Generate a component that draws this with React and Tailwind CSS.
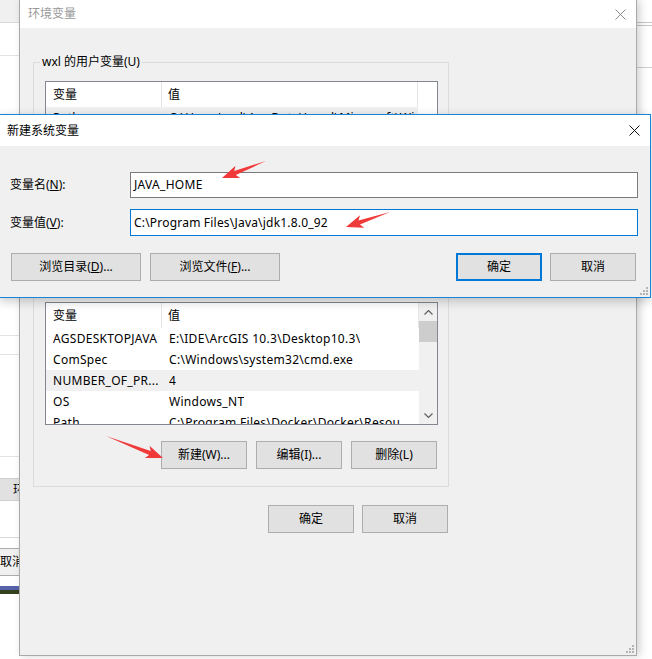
import React from 'react';

const FONT = "font-['Noto_Sans','Noto_Sans_CJK_SC',sans-serif]";

const CloseIcon = ({ color }) => (
  <svg width="11" height="11" viewBox="0 0 11 11">
    <path d="M0.5 0.5 L10.5 10.5 M10.5 0.5 L0.5 10.5" stroke={color} strokeWidth="1" fill="none" />
  </svg>
);

const Grip = () => (
  <svg width="8" height="8" viewBox="0 0 8 8" fill="#b4b4b4">
    <rect x="6" y="0" width="2" height="2" />
    <rect x="3" y="3" width="2" height="2" />
    <rect x="6" y="3" width="2" height="2" />
    <rect x="0" y="6" width="2" height="2" />
    <rect x="3" y="6" width="2" height="2" />
    <rect x="6" y="6" width="2" height="2" />
  </svg>
);

const Chevron = ({ up }) => (
  <svg width="9" height="5" viewBox="0 0 9 5">
    <path d={up ? "M0.5 4.5 L4.5 0.5 L8.5 4.5" : "M0.5 0.5 L4.5 4.5 L8.5 0.5"} stroke="#606060" strokeWidth="1.2" fill="none" />
  </svg>
);

const Btn = ({ children, className = "", primary }) => (
  <div
    className={`flex items-center justify-center h-[28px] bg-[#e1e1e1] text-[12px] text-black ${
      primary ? "border-2 border-[#0078d7]" : "border border-[#adadad]"
    } ${className}`}
  >
    {children}
  </div>
);

const Row = ({ name, value, active }) => (
  <div className={`flex h-[21px] items-center text-[12px] tracking-[0.3px] text-black whitespace-nowrap ${active ? "bg-[#f0f0f0]" : ""}`}>
    <div className="w-[116px] shrink-0 pl-[7px] overflow-hidden">{name}</div>
    <div className="pl-[7px] overflow-hidden">{value}</div>
  </div>
);

const ListHeader = () => (
  <div className="flex h-[25px] items-center text-[12px] text-black bg-white">
    <div className="w-[116px] shrink-0 h-full flex items-center pl-[7px] border-r border-[#e5e5e5]">变量</div>
    <div className="flex-1 h-full flex items-center pl-[6px] border-r border-[#e5e5e5]">值</div>
  </div>
);

const sysRows = [
  ["AGSDESKTOPJAVA", "E:\\IDE\\ArcGIS 10.3\\Desktop10.3\\"],
  ["ComSpec", "C:\\Windows\\system32\\cmd.exe"],
  ["NUMBER_OF_PR...", "4", true],
  ["OS", "Windows_NT"],
  ["Path", "C:\\Program Files\\Docker\\Docker\\Resou..."],
];

// snipping-tool style arrow, tail tapering to a point
const arrowPts = (tx, ty, sx, sy) => {
  const dx = tx - sx;
  const dy = ty - sy;
  const len = Math.hypot(dx, dy);
  const ux = dx / len;
  const uy = dy / len;
  const px = -uy;
  const py = ux;
  const head = 14;
  const hw = 6.5;
  const sw = 2.2;
  const bx = tx - ux * head;
  const by = ty - uy * head;
  const pts = [
    [sx, sy],
    [bx + px * sw, by + py * sw],
    [bx + px * hw - ux * 3, by + py * hw - uy * 3],
    [tx, ty],
    [bx - px * hw - ux * 3, by - py * hw - uy * 3],
    [bx - px * sw, by - py * sw],
  ];
  return pts.map((p) => p.join(",")).join(" ");
};

const Arrows = () => (
  <svg className="absolute inset-0 pointer-events-none" width="652" height="659">
    <polygon points={arrowPts(222, 178, 266, 161)} fill="#f03a3a" />
    <polygon points={arrowPts(346, 227, 390, 212)} fill="#f03a3a" />
    <polygon points={arrowPts(163, 458, 106, 436)} fill="#f03a3a" />
  </svg>
);

const BackWindow = () => (
  <div className="absolute left-0 top-0 w-[40px] h-[659px] flex flex-col bg-white">
    <div className="h-[23px] bg-[#f0f0f0] border-b border-[#dadada]" />
    <div className="h-[33px] border-b border-[#e3e3e3]" />
    <div className="h-[280px] border-b border-[#e3e3e3]" />
    <div className="h-[19px] border-b border-[#e3e3e3]" />
    <div className="h-[102px] border-b border-[#e3e3e3]" />
    <div className="h-[21px]" />
    <div className="h-[23px] bg-[#e1e1e1] border-y border-[#cfcfcf] pl-[13px] text-[12px] leading-[21px]">环境</div>
    <div className="h-[37px] border-b border-[#dadada]" />
    <div className="h-[10px]" />
    <div className="h-[28px] border-y border-[#adadad] bg-[#f0f0f0] text-[12px] leading-[26px]">取消</div>
    <div className="h-[10px]" />
    <div className="h-[4px] bg-[#5663a8]" />
    <div className="h-[4px] bg-[#33421c]" />
  </div>
);

const RightStrip = () => (
  <div className="absolute right-0 top-0 w-[20px] h-[659px] flex flex-col bg-white">
    <div className="h-[22px]" />
    <div className="h-[4px] border-y border-[#c8c8c8]" />
    <div className="h-[42px] border-b border-[#d0d0d0]" />
  </div>
);

const EnvWindow = () => (
  <div className="absolute left-[19px] top-0 w-[618px] h-[656px] bg-[#f0f0f0] border-x border-b border-[#a9a9a9] shadow-[3px_0_8px_rgba(0,0,0,0.18)] flex flex-col">
    <div className="h-[28px] bg-white flex items-center justify-between pl-[8px] pr-[10px] shrink-0">
      <span className="text-[12px] text-[#999999]">环境变量</span>
      <CloseIcon color="#8a8a8a" />
    </div>
    <div className="pl-[13px] pt-[34px] flex flex-col">
      {/* user group */}
      <div className="relative w-[416px] border border-[#dcdcdc] pt-[18px] pb-[18px] pl-[11px]">
        <span className="absolute left-[6px] top-[-9px] px-[2px] bg-[#f0f0f0] text-[12px] leading-[16px] text-black">
          wxl 的用户变量(U)
        </span>
        <div className="w-[393px] h-[123px] border border-[#828790] bg-white overflow-hidden">
          <div className="w-[372px]">
            <ListHeader />
            <Row name="Path" value="C:\Users\wxl\AppData\Local\Microsoft\WindowsA..." active />
            <Row name="TEMP" value="C:\Users\wxl\AppData\Local\Temp" />
          </div>
        </div>
        <div className="flex justify-end gap-[9px] pr-[11px] mt-[17px]">
          <Btn className="w-[86px]">新建(N)...</Btn>
          <Btn className="w-[86px]">编辑(E)...</Btn>
          <Btn className="w-[86px]">删除(D)</Btn>
        </div>
      </div>
      {/* system group */}
      <div className="relative w-[416px] mt-[15px] border border-[#dcdcdc] pt-[18px] pb-[17px] pl-[11px]">
        <span className="absolute left-[6px] top-[-9px] px-[2px] bg-[#f0f0f0] text-[12px] leading-[16px] text-black">
          系统变量(S)
        </span>
        <div className="w-[393px] h-[123px] border border-[#828790] bg-white overflow-hidden flex">
          <div className="w-[373px] shrink-0">
            <ListHeader />
            {sysRows.map(([n, v, a]) => (
              <Row key={n} name={n} value={v} active={a} />
            ))}
          </div>
          <div className="w-[18px] shrink-0 bg-[#f0f0f0] flex flex-col items-center">
            <div className="h-[18px] flex items-center justify-center">
              <Chevron up />
            </div>
            <div className="w-full h-[21px] bg-[#cdcdcd]" />
            <div className="flex-1" />
            <div className="h-[18px] flex items-center justify-center">
              <Chevron />
            </div>
          </div>
        </div>
        <div className="flex justify-end gap-[9px] pr-[11px] mt-[16px]">
          <Btn className="w-[86px]">新建(W)...</Btn>
          <Btn className="w-[86px]">编辑(I)...</Btn>
          <Btn className="w-[86px]">删除(L)</Btn>
        </div>
      </div>
      <div className="w-[416px] flex justify-end gap-[8px] pr-[1px] mt-[18px]">
        <Btn className="w-[86px]">确定</Btn>
        <Btn className="w-[86px]">取消</Btn>
      </div>
    </div>
    <div className="flex-1" />
    <div className="flex justify-end pr-[2px] pb-[2px]">
      <Grip />
    </div>
  </div>
);

const NewVarDialog = () => (
  <div className="absolute left-[-1px] top-[114px] w-[652px] h-[184px] bg-[#f0f0f0] border border-[#1883d7] shadow-[0_3px_10px_rgba(0,0,0,0.22)] flex flex-col">
    <div className="h-[31px] bg-white flex items-center justify-between pl-[7px] pr-[10px] shrink-0">
      <span className="text-[12px] text-black">新建系统变量</span>
      <CloseIcon color="#111111" />
    </div>
    <div className="flex flex-col pt-[26px] pl-[10px] pr-[12px]">
      <div className="flex items-center">
        <div className="w-[120px] text-[12px] text-black">
          变量名(<span className="underline">N</span>):
        </div>
        <div className="flex-1 h-[26px] border border-[#7a7a7a] bg-white flex items-center pl-[3px] text-[12px] tracking-[0.3px] text-black">
          JAVA_HOME
        </div>
      </div>
      <div className="flex items-center mt-[11px]">
        <div className="w-[120px] text-[12px] text-black">
          变量值(<span className="underline">V</span>):
        </div>
        <div className="flex-1 h-[27px] border border-[#0078d7] bg-white flex items-center pl-[3px] text-[12px] tracking-[0.2px] text-black">
          C:\Program Files\Java\jdk1.8.0_92
        </div>
      </div>
    </div>
    <div className="flex items-center pl-[11px] pr-[14px] mt-[17px]">
      <Btn className="w-[130px]">
        <span>
          浏览目录(<span className="underline">D</span>)...
        </span>
      </Btn>
      <Btn className="w-[130px] ml-[9px]">
        <span>
          浏览文件(<span className="underline">F</span>)...
        </span>
      </Btn>
      <div className="flex-1" />
      <Btn primary className="w-[86px]">确定</Btn>
      <Btn className="w-[86px] ml-[8px]">取消</Btn>
    </div>
    <div className="flex-1" />
    <div className="flex justify-end pr-[2px] pb-[2px]">
      <Grip />
    </div>
  </div>
);

export default function App() {
  return (
    <div className={`relative w-[652px] h-[659px] overflow-hidden bg-white ${FONT}`}>
      <BackWindow />
      <RightStrip />
      <EnvWindow />
      <NewVarDialog />
      <Arrows />
    </div>
  );
}
